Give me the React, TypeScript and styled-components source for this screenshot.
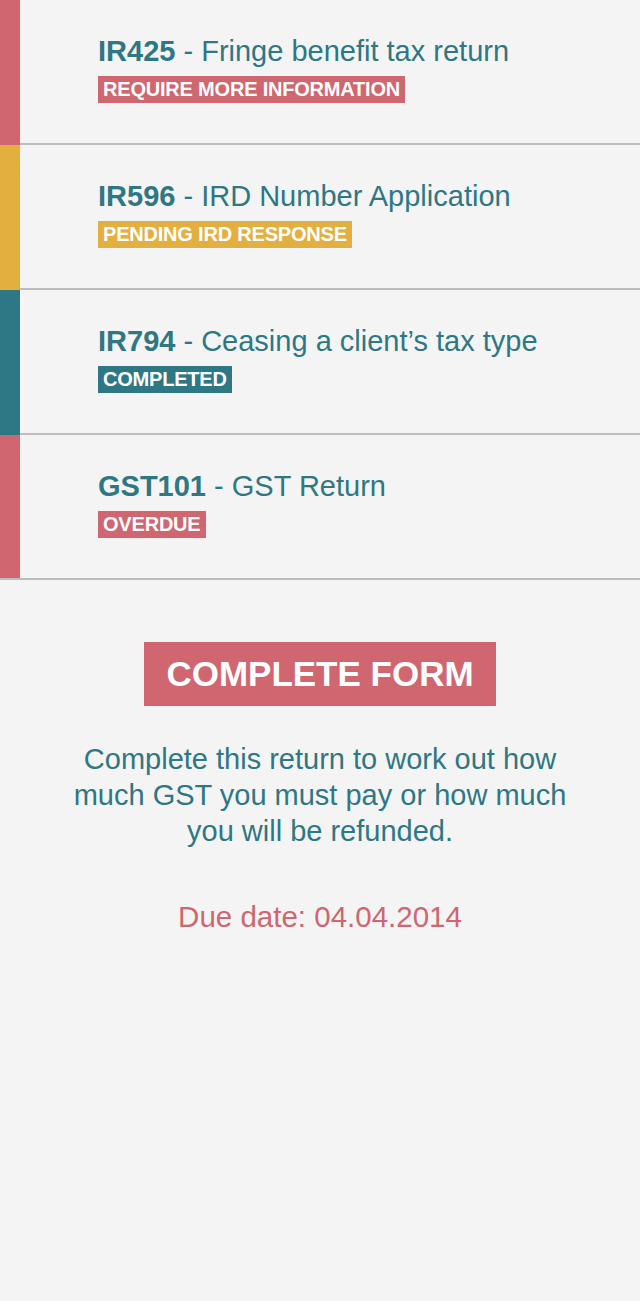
import styled, { createGlobalStyle } from 'styled-components'

const RED = '#d0666f'
const YELLOW = '#e3b040'
const TEAL = '#2e7784'
const LINE = '#bcbcbc'

const GlobalStyle = createGlobalStyle`
  html, body {
    margin: 0;
    padding: 0;
    background: #f4f4f4;
  }
  body {
    font-family: "Liberation Sans", Arial, Helvetica, sans-serif;
    color: ${TEAL};
  }
`

const Page = styled.div`
  min-height: 1301px;
  background: #f4f4f4;
`

const List = styled.ul`
  list-style: none;
  margin: 0;
  padding: 0;
  border-bottom: 2px solid ${LINE};
`

const Stripe = styled.div<{ $color: string }>`
  width: 20px;
  flex: none;
  background: ${(p) => p.$color};
`

const Body = styled.div`
  flex: 1;
  padding: 34px 20px 40px 78px;
`

const Row = styled.li`
  display: flex;
  &:not(:last-child) ${Body} {
    border-bottom: 2px solid ${LINE};
  }
`

const Title = styled.h2`
  margin: 0;
  font-size: 29px;
  line-height: 34px;
  font-weight: normal;
  color: ${TEAL};
  b {
    font-weight: bold;
  }
`

const Badge = styled.span<{ $color: string }>`
  display: inline-block;
  margin-top: 8px;
  padding: 0 5px;
  background: ${(p) => p.$color};
  color: #fff;
  font-size: 20px;
  line-height: 27px;
  font-weight: bold;
  letter-spacing: -0.2px;
  text-transform: uppercase;
`

const Detail = styled.section`
  display: flex;
  flex-direction: column;
  align-items: center;
  padding: 62px 40px 0;
  text-align: center;
`

const Button = styled.button`
  border: none;
  background: ${RED};
  color: #fff;
  font-family: inherit;
  font-size: 35px;
  font-weight: bold;
  height: 64px;
  padding: 0 22px;
  text-transform: uppercase;
  cursor: pointer;
`

const Description = styled.p`
  margin: 35px 0 0;
  max-width: 510px;
  font-size: 29px;
  line-height: 36px;
  color: ${TEAL};
`

const DueDate = styled.p`
  margin: 50px 0 0;
  font-size: 29.5px;
  line-height: 36px;
  color: ${RED};
`

const forms = [
  { code: 'IR425', name: 'Fringe benefit tax return', status: 'Require more information', color: RED },
  { code: 'IR596', name: 'IRD Number Application', status: 'Pending IRD response', color: YELLOW },
  { code: 'IR794', name: 'Ceasing a client\u2019s tax type', status: 'Completed', color: TEAL },
  { code: 'GST101', name: 'GST Return', status: 'Overdue', color: RED },
]

export default function App() {
  return (
    <Page>
      <GlobalStyle />
      <List>
        {forms.map((f) => (
          <Row key={f.code}>
            <Stripe $color={f.color} />
            <Body>
              <Title>
                <b>{f.code}</b> - {f.name}
              </Title>
              <Badge $color={f.color}>{f.status}</Badge>
            </Body>
          </Row>
        ))}
      </List>
      <Detail>
        <Button>Complete form</Button>
        <Description>
          Complete this return to work out how much GST you must pay or how much you will be refunded.
        </Description>
        <DueDate>Due date: 04.04.2014</DueDate>
      </Detail>
    </Page>
  )
}
